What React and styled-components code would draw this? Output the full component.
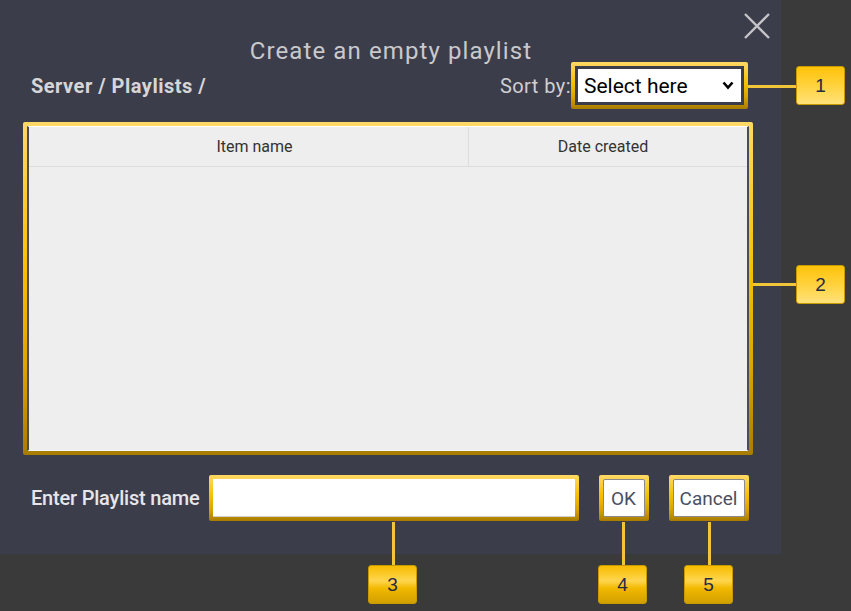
import React from "react";
import styled, { createGlobalStyle } from "styled-components";

const Global = createGlobalStyle`
  html, body { margin: 0; padding: 0; background: #3a3a3a; }
  body { font-family: Roboto, "Liberation Sans", sans-serif; width: 851px; height: 611px; overflow: hidden; }
  #root { position: relative; width: 851px; height: 611px; }
`;

const Dialog = styled.div`
  position: relative;
  box-sizing: border-box;
  width: 781px;
  height: 554px;
  background: #3c3d4b;
  padding: 37px 28px 0 23px;
  display: flex;
  flex-direction: column;
`;

const Close = styled.button`
  position: absolute;
  top: 13px;
  left: 744px;
  width: 26px;
  height: 26px;
  padding: 0;
  border: 0;
  background: none;
  cursor: pointer;
  svg { display: block; }
`;

const Title = styled.h1`
  margin: 0;
  height: 25px;
  line-height: 29px;
  text-align: center;
  font-size: 24px;
  font-weight: 400;
  color: #c9c9cc;
  letter-spacing: 1.1px;
  padding-left: 6px;
`;

const Toolbar = styled.div`
  display: flex;
  align-items: center;
  justify-content: space-between;
  height: 47px;
  padding: 0 5px 0 8px;
`;

const Crumb = styled.div`
  font-size: 20px;
  font-weight: 700;
  color: #d6d6d8;
  letter-spacing: 0.5px;
`;

const SortGroup = styled.div`
  display: flex;
  align-items: center;
`;

const SortLabel = styled.span`
  font-size: 20px;
  color: #cfcfd2;
  letter-spacing: 0.45px;
`;

const Frame = styled.div`
  box-sizing: border-box;
  padding: ${(p) => p.$pad || 4}px;
  background: linear-gradient(180deg, #ffd966 0%, #f5c000 45%, #d9a400 75%, #a87c00 100%);
  border-radius: 2px;
  width: ${(p) => (p.$w ? `${p.$w}px` : "auto")};
  height: ${(p) => (p.$h ? `${p.$h}px` : "auto")};
  flex: none;
`;

const Gap = styled.div`
  background: #3c3d4b;
  padding: 3px;
  height: 100%;
  box-sizing: border-box;
`;

const SelectWrap = styled.div`
  position: relative;
  height: 100%;
`;

const Select = styled.select`
  appearance: none;
  box-sizing: border-box;
  width: 100%;
  height: 100%;
  border: 0;
  border-radius: 0;
  background: #fff;
  color: #000;
  font-family: Roboto, "Liberation Sans", sans-serif;
  font-size: 21px;
  padding: 0 0 0 6px;
  outline: none;
`;

const Chevron = styled.svg`
  position: absolute;
  right: 7px;
  top: 12px;
  pointer-events: none;
`;

const Table = styled.div`
  box-sizing: border-box;
  height: 100%;
  background: #eeeeee;
  border-left: 2px solid #4b4c55;
  border-right: 2px solid #4b4c55;
  border-top: 1px solid #ffffff;
  border-bottom: 1px solid #f8f8f8;
`;

const HeadRow = styled.div`
  display: grid;
  grid-template-columns: 439px 1fr;
  height: 39px;
  border-bottom: 1px solid #dcdcdc;
`;

const HeadCell = styled.div`
  display: flex;
  align-items: center;
  justify-content: center;
  font-size: 16px;
  color: #333;
  padding: ${(p) => (p.$first ? "0 0 0 12px" : "0 10px 0 0")};
  border-left: ${(p) => (p.$first ? "0" : "1px solid #dcdcdc")};
`;

const Footer = styled.div`
  display: flex;
  align-items: center;
  margin-top: 20px;
  padding-left: 8px;
  height: 46px;
`;

const Label = styled.label`
  font-size: 20px;
  font-weight: 500;
  color: #e6e6ea;
  margin-right: 9px;
  letter-spacing: -0.2px;
  white-space: nowrap;
`;

const Input = styled.input`
  box-sizing: border-box;
  width: 100%;
  height: 100%;
  border: 0;
  border-bottom: 1px solid #cfcfcf;
  background: #fff;
  outline: none;
  margin: 0;
`;

const Button = styled.button`
  box-sizing: border-box;
  width: 100%;
  height: 100%;
  margin: 0;
  padding: 0;
  background: #fff;
  border: 1px solid #8a8a8a;
  border-radius: 2px;
  font-family: Roboto, "Liberation Sans", sans-serif;
  font-size: 19px;
  color: #4a4f63;
`;

const Spacer = styled.div`
  width: ${(p) => p.$w || 1}px;
  height: ${(p) => p.$h || 1}px;
  flex: none;
`;

/* Annotation overlay */
const Callout = styled.div`
  position: absolute;
  left: ${(p) => p.$x}px;
  top: ${(p) => p.$y}px;
  width: 49px;
  height: 39px;
  box-sizing: border-box;
  border: 1px solid #c79a00;
  border-radius: 3px;
  background: ${(p) =>
    p.$light
      ? "linear-gradient(180deg, #ffc20a 0%, #ffd23d 50%, #ffe27a 100%)"
      : "linear-gradient(180deg, #f7bd00 0%, #ffd54f 40%, #f2b900 60%, #d19f00 100%)"};
  display: flex;
  align-items: center;
  justify-content: center;
  font-family: "Liberation Sans", sans-serif;
  font-size: 19px;
  color: #262b45;
`;

const Leader = styled.div`
  position: absolute;
  left: ${(p) => p.$x}px;
  top: ${(p) => p.$y}px;
  width: ${(p) => p.$w}px;
  height: ${(p) => p.$h}px;
  background: #f0c53a;
`;

export default function App() {
  return (
    <>
      <Global />
      <Dialog>
        <Close aria-label="Close">
          <svg width="26" height="26" viewBox="0 0 26 26">
            <path d="M1 1 L25 25 M25 1 L1 25" stroke="#c4c4c8" strokeWidth="2.4" />
          </svg>
        </Close>
        <Title>Create an empty playlist</Title>
        <Toolbar>
          <Crumb>Server / Playlists /</Crumb>
          <SortGroup>
            <SortLabel>Sort by:</SortLabel>
            <Frame $w={177} $h={47}>
              <Gap>
                <SelectWrap>
                  <Select defaultValue="">
                    <option value="">Select here</option>
                    <option value="name">Item name</option>
                    <option value="date">Date created</option>
                  </Select>
                  <Chevron width="12" height="9" viewBox="0 0 12 9">
                    <path d="M1.5 1.5 L6 6.5 L10.5 1.5" stroke="#000" strokeWidth="2.6" fill="none" />
                  </Chevron>
                </SelectWrap>
              </Gap>
            </Frame>
          </SortGroup>
        </Toolbar>
        <Spacer $h={13} />
        <Frame $w={730} $h={333}>
          <Table>
            <HeadRow>
              <HeadCell $first>Item name</HeadCell>
              <HeadCell>Date created</HeadCell>
            </HeadRow>
          </Table>
        </Frame>
        <Footer>
          <Label>Enter Playlist name</Label>
          <Frame $w={370} $h={46}>
            <Input type="text" />
          </Frame>
          <Spacer $w={20} />
          <Frame $w={50} $h={46}>
            <Button>OK</Button>
          </Frame>
          <Spacer $w={20} />
          <Frame $w={80} $h={46}>
            <Button>Cancel</Button>
          </Frame>
        </Footer>
      </Dialog>

      <Leader $x={748} $y={85} $w={48} $h={3} />
      <Callout $x={796} $y={66} $light>1</Callout>
      <Leader $x={753} $y={283} $w={43} $h={3} />
      <Callout $x={796} $y={265} $light>2</Callout>
      <Leader $x={392} $y={522} $w={3} $h={43} />
      <Callout $x={368} $y={565}>3</Callout>
      <Leader $x={622} $y={522} $w={3} $h={43} />
      <Callout $x={598} $y={565}>4</Callout>
      <Leader $x={708} $y={522} $w={3} $h={43} />
      <Callout $x={684} $y={565}>5</Callout>
    </>
  );
}
